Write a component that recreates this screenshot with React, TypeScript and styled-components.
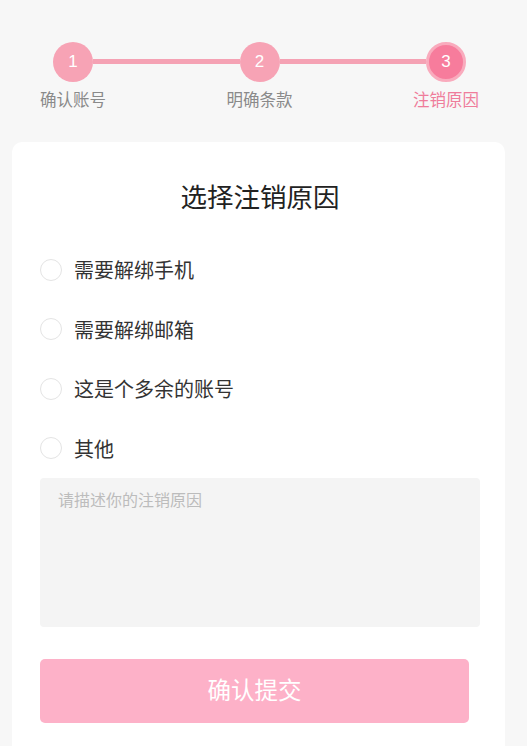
import React, { useState } from 'react';
import styled, { createGlobalStyle } from 'styled-components';

const GlobalStyle = createGlobalStyle`
  html, body {
    margin: 0;
    padding: 0;
    background: #f7f7f7;
    font-family: "Noto Sans CJK SC", "Noto Sans", sans-serif;
  }
`;

const steps = ['确认账号', '明确条款', '注销原因'];
const reasons = ['需要解绑手机', '需要解绑邮箱', '这是个多余的账号', '其他'];

const App = () => {
  const [picked, setPicked] = useState<number | null>(null);
  const current = 2;

  return (
    <Page>
      <GlobalStyle />
      <StepTrack>
        {steps.map((label, i) => (
          <React.Fragment key={label}>
            {i > 0 && <Connector />}
            <Step>
              <StepDot active={i === current}>{i + 1}</StepDot>
              <StepLabel active={i === current}>{label}</StepLabel>
            </Step>
          </React.Fragment>
        ))}
      </StepTrack>

      <Card>
        <Title>选择注销原因</Title>
        <ReasonList>
          {reasons.map((r, i) => (
            <ReasonRow key={r} onClick={() => setPicked(i)}>
              <RadioDot checked={picked === i} />
              <ReasonText>{r}</ReasonText>
            </ReasonRow>
          ))}
        </ReasonList>
        <ReasonInput placeholder="请描述你的注销原因" />
        <SubmitButton type="button">确认提交</SubmitButton>
      </Card>
    </Page>
  );
};

export default App;

const Page = styled.div`
  min-height: 746px;
  padding-top: 42px;
  box-sizing: border-box;
`;

const StepTrack = styled.div`
  display: flex;
  align-items: flex-start;
  padding: 0 41px 0 33px;
`;

const Step = styled.div`
  width: 80px;
  display: flex;
  flex-direction: column;
  align-items: center;
`;

const Connector = styled.div`
  flex: 1;
  height: 5px;
  margin: 17px -20px 0;
  background: #f5a2b4;
`;

const StepDot = styled.div<{ active?: boolean }>`
  position: relative;
  z-index: 1;
  width: 40px;
  height: 40px;
  box-sizing: border-box;
  border-radius: 50%;
  display: flex;
  align-items: center;
  justify-content: center;
  font-family: "Liberation Sans", Arial, sans-serif;
  font-size: 17px;
  color: #fff;
  background: ${p => (p.active ? '#f77c9c' : '#f7a3b5')};
  border: ${p => (p.active ? '3px solid #f9abbd' : 'none')};
`;

const StepLabel = styled.div<{ active?: boolean }>`
  margin-top: 7px;
  font-size: 16.5px;
  line-height: 20px;
  white-space: nowrap;
  color: ${p => (p.active ? '#ef7d9b' : '#8a8a8a')};
`;

const Card = styled.div`
  margin: 33px 22px 0 12px;
  padding: 39px 25px 40px 28px;
  background: #fff;
  border-radius: 10px;
  min-height: 620px;
  box-sizing: border-box;
`;

const Title = styled.h2`
  margin: 0;
  text-align: center;
  font-size: 26.5px;
  line-height: 30px;
  font-weight: 400;
  color: #222;
`;

const ReasonList = styled.div`
  margin-top: 29px;
  display: flex;
  flex-direction: column;
`;

const ReasonRow = styled.div`
  height: 59.5px;
  display: flex;
  align-items: center;
  gap: 12px;
  cursor: pointer;
`;

const RadioDot = styled.span<{ checked?: boolean }>`
  width: 22px;
  height: 22px;
  box-sizing: border-box;
  border-radius: 50%;
  border: ${p => (p.checked ? '6px solid #f77c9c' : '1.5px solid #e4e4e4')};
  background: #fff;
`;

const ReasonText = styled.span`
  font-size: 20px;
  color: #333;
`;

const ReasonInput = styled.textarea`
  display: block;
  width: 100%;
  height: 149px;
  box-sizing: border-box;
  margin: 0;
  padding: 11px 18px;
  border: none;
  border-radius: 4px;
  background: #f4f4f4;
  resize: none;
  outline: none;
  font-family: inherit;
  font-size: 16px;
  line-height: 20px;
  color: #333;

  &::placeholder {
    color: #bcbcbc;
  }
`;

const SubmitButton = styled.button`
  display: block;
  width: calc(100% - 11px);
  height: 64px;
  margin-top: 32px;
  padding: 0 0 4px;
  border: none;
  border-radius: 5px;
  background: #fdb1c8;
  color: #fff;
  font-family: inherit;
  font-size: 23.5px;
  cursor: pointer;
`;
